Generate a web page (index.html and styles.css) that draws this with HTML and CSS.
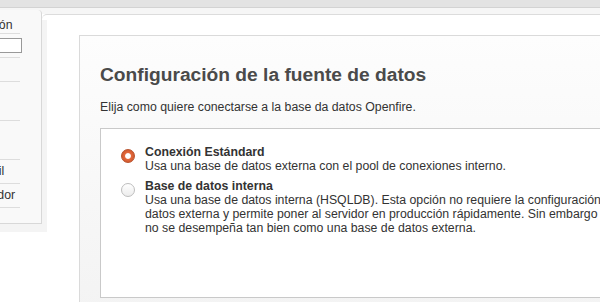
FILE: index.html
```html
<!DOCTYPE html>
<html lang="es">
<head>
  <meta charset="UTF-8">
  <meta name="viewport" content="width=device-width, initial-scale=1.0">
  <title>Openfire - Configuración</title>
  <link rel="stylesheet" href="styles.css">
</head>
<body>
  <div class="topbar"></div>

  <div class="layout">
    <div class="side-wrap">
      <div class="sidebar">
        <h3 class="side-title">Progreso de la instalación</h3>
        <div class="progress-row">
          <div class="progress-bar"><div class="progress-fill" style="width: 40%;"></div></div>
        </div>
        <ul class="steps">
          <li>Selección de Idioma</li>
          <li>Configuración del<br>Servidor</li>
          <li>Configuración de la<br>Base de Datos</li>
          <li>Configuración del Perfil</li>
          <li>Cuenta del Administrador</li>
        </ul>
      </div>
    </div>

    <div class="main">
      <div class="setup-box">
        <h1>Configuración de la fuente de datos</h1>
        <p class="intro">Elija como quiere conectarse a la base da datos Openfire.</p>

        <div class="db-options">
          <div class="option">
            <span class="radio checked"></span>
            <div class="option-text">
              <strong>Conexión Estándard</strong>
              <div>Usa una base de datos externa con el pool de conexiones interno.</div>
            </div>
          </div>
          <div class="option">
            <span class="radio"></span>
            <div class="option-text">
              <strong>Base de datos interna</strong>
              <div>Usa una base de datos interna (HSQLDB). Esta opción no requiere la configuración de base de datos externa y permite poner al servidor en producción rápidamente. Sin embargo esta opción no se desempeña tan bien como una base de datos externa.</div>
            </div>
          </div>
        </div>
      </div>
    </div>
  </div>
</body>
</html>
```

FILE: styles.css
```css
html {
  overflow: hidden;
}
body {
  margin: 0;
  font-family: "Liberation Sans", Arial, sans-serif;
  font-size: 12.3px;
  color: #333;
  background: #fff;
}
.topbar {
  height: 7px;
  background: #e3e3e3;
  border-bottom: 1px solid #d3d3d3;
}
.layout {
  display: flex;
  align-items: flex-start;
  background: linear-gradient(#f6f6f6 6px, #fff 6px);
}

/* sidebar */
.side-wrap {
  position: relative;
  z-index: 1;
  flex: none;
  width: 47px;
  height: 212px;
  margin-top: 12px;
  background: #f4f4f4;
}
.sidebar {
  box-sizing: border-box;
  width: 182px;
  margin: -10px 0 0 -140px;
  padding: 8px 0 15px 17px;
  background: #f9f9f9;
  border-right: 1px solid #d8d8d8;
  border-bottom: 1px solid #d8d8d8;
  border-top-right-radius: 4px;
}
.side-title {
  margin: 0 21px 0 -11px;
  padding-left: 5px;
  font-size: 12.3px;
  font-weight: normal;
  line-height: 15px;
  border-bottom: 1px solid #ddd;
  white-space: nowrap;
}
.progress-row {
  margin-right: 21px;
  padding: 4px 0;
  border-bottom: 1px solid #ddd;
}
.progress-bar {
  height: 13px;
  margin-right: -2px;
  border: 1px solid #999;
  background: #fff;
}
.progress-fill {
  height: 100%;
  background: #fff;
}
.steps {
  list-style: none;
  margin: 0 21px 0 0;
  padding: 0;
}
.steps li {
  padding: 4px 0;
  line-height: 15px;
  border-bottom: 1px solid #ddd;
  white-space: nowrap;
}

/* main panel */
.main {
  position: relative;
  flex: 1;
  min-width: 0;
  min-height: 300px;
  margin: 6px 0 0 -5px;
  padding: 20px 0 0 37px;
  background: #fff;
  border-top: 1px solid #dcdcdc;
  border-top-left-radius: 5px;
}
.setup-box {
  width: 594px;
  min-height: 280px;
  padding-left: 20px;
  background: linear-gradient(#fdfdfd, #f3f3f3);
  border-top: 1px solid #dadada;
  border-left: 1px solid #dadada;
}
.setup-box h1 {
  margin: 28px 0 0;
  font-size: 19.2px;
  line-height: 22px;
  color: #4a4a4a;
}
.intro {
  margin: 14px 0 0;
  line-height: 15px;
}
.db-options {
  box-sizing: border-box;
  height: 170px;
  margin-top: 13px;
  padding: 16px 20px;
  background: #fff;
  border: 1px solid #c9c9c9;
}
.option {
  display: flex;
  gap: 10px;
}
.option + .option {
  margin-top: 6px;
}
.option-text {
  flex: 1;
  line-height: 14px;
}
.radio {
  flex: none;
  box-sizing: border-box;
  width: 14px;
  height: 14px;
  margin-top: 4px;
  border-radius: 50%;
  border: 1px solid #bdbdbd;
  background: linear-gradient(#fff, #ececec);
}
.radio.checked {
  border-color: #b8522d;
  background: radial-gradient(circle, #fff 0 2.4px, #e2693d 3.4px, #d45a2f 6px);
}
```
